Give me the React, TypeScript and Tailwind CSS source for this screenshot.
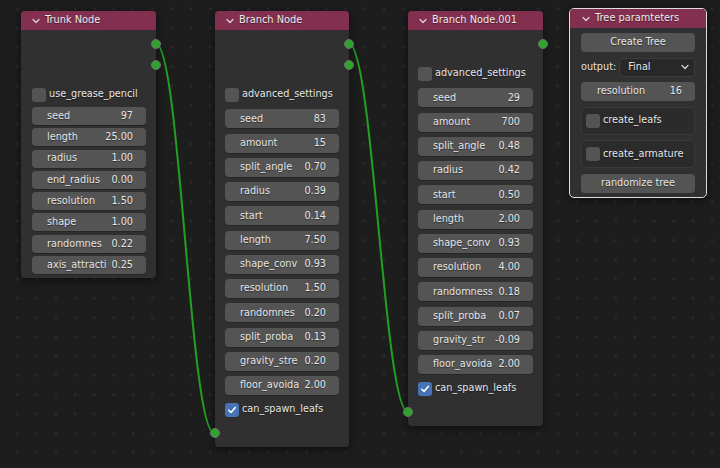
import React from "react";

type Field = [string, string];

const trunkFields: Field[] = [
  ["seed", "97"],
  ["length", "25.00"],
  ["radius", "1.00"],
  ["end_radius", "0.00"],
  ["resolution", "1.50"],
  ["shape", "1.00"],
  ["randomnes", "0.22"],
  ["axis_attracti", "0.25"],
];

const branchFields: Field[] = [
  ["seed", "83"],
  ["amount", "15"],
  ["split_angle", "0.70"],
  ["radius", "0.39"],
  ["start", "0.14"],
  ["length", "7.50"],
  ["shape_conv", "0.93"],
  ["resolution", "1.50"],
  ["randomnes", "0.20"],
  ["split_proba", "0.13"],
  ["gravity_stre", "0.20"],
  ["floor_avoida", "2.00"],
];

const branch001Fields: Field[] = [
  ["seed", "29"],
  ["amount", "700"],
  ["split_angle", "0.48"],
  ["radius", "0.42"],
  ["start", "0.50"],
  ["length", "2.00"],
  ["shape_conv", "0.93"],
  ["resolution", "4.00"],
  ["randomness", "0.18"],
  ["split_proba", "0.07"],
  ["gravity_str", "-0.09"],
  ["floor_avoida", "2.00"],
];

function Chevron() {
  return (
    <svg width="8" height="6" viewBox="0 0 8 6" className="shrink-0">
      <path d="M1 1.5 L4 4.5 L7 1.5" fill="none" stroke="#d8d8d8" strokeWidth="1.2" strokeLinecap="round" strokeLinejoin="round" />
    </svg>
  );
}

function Header({ title }: { title: string }) {
  return (
    <div className="flex h-[19px] items-center gap-[5px] rounded-t-[4px] bg-[#833050] pl-[11px] text-[9.8px] text-[#ececec]">
      <Chevron />
      <span>{title}</span>
    </div>
  );
}

function Socket({ side }: { side: "left" | "right" }) {
  return (
    <div
      className={
        side === "right"
          ? "absolute -right-[5px] top-1/2 h-[10px] w-[10px] -translate-y-1/2 rounded-full border border-[#6f6f6f] bg-[#2ea32e]"
          : "absolute -left-[5px] top-1/2 h-[10px] w-[10px] -translate-y-1/2 rounded-full border border-[#6f6f6f] bg-[#2ea32e]"
      }
    />
  );
}

function SocketRow({ side }: { side: "left" | "right" }) {
  return (
    <div className="relative h-[21px]">
      <Socket side={side} />
    </div>
  );
}

function Check({ label, checked }: { label: string; checked?: boolean }) {
  return (
    <div className="flex h-[21px] items-center gap-[3px]">
      <div
        className={
          checked
            ? "flex h-[14px] w-[14px] items-center justify-center rounded-[3px] bg-[#4772b3]"
            : "h-[14px] w-[14px] rounded-[3px] bg-[#545454]"
        }
      >
        {checked && (
          <svg width="10" height="10" viewBox="0 0 10 10">
            <path d="M1.8 5.2 L4 7.4 L8.3 2.4" fill="none" stroke="#ffffff" strokeWidth="1.6" strokeLinecap="round" strokeLinejoin="round" />
          </svg>
        )}
      </div>
      <span>{label}</span>
    </div>
  );
}

function FieldRow({ f, tall }: { f: Field; tall?: boolean }) {
  return (
    <div
      className={
        tall
          ? "flex h-[19px] items-center justify-between rounded-[4px] bg-[#545454] pl-[15px] pr-[13px] shadow-[0_1px_0_rgba(0,0,0,0.2)]"
          : "flex h-[18px] items-center justify-between rounded-[4px] bg-[#545454] pl-[15px] pr-[13px] shadow-[0_1px_0_rgba(0,0,0,0.2)]"
      }
    >
      <span className="whitespace-nowrap">{f[0]}</span>
      <span>{f[1]}</span>
    </div>
  );
}

const wireD = (x1: number, y1: number, x2: number, y2: number) => {
  const d = 24;
  return `M${x1} ${y1} C${x1 + d} ${y1} ${x2 - d} ${y2} ${x2} ${y2}`;
};

export default function App() {
  return (
    <div className="relative h-[468px] w-[720px] overflow-hidden bg-[#1d1d1d] font-['DejaVu_Sans',sans-serif] text-[9.7px] text-[#e6e6e6] [text-shadow:0_1px_1px_rgba(0,0,0,0.45)]">
      {/* canvas: dot grid + wires */}
      <svg className="absolute inset-0" width="720" height="468">
        <defs>
          <pattern id="grid" x="0" y="0" width="19.3" height="19.3" patternUnits="userSpaceOnUse">
            <rect x="16" y="7.4" width="2.6" height="2.6" fill="#2a2a2a" />
          </pattern>
        </defs>
        <rect width="720" height="468" fill="url(#grid)" />
        <path d={wireD(156, 44, 214, 433)} fill="none" stroke="#22a022" strokeWidth="2" />
        <path d={wireD(349, 44, 408, 412)} fill="none" stroke="#22a022" strokeWidth="2" />
      </svg>

      {/* Trunk Node */}
      <div className="absolute left-[21px] top-[11px] w-[135px] rounded-[4px] bg-[#303030] pb-[4px] shadow-[0_2px_8px_rgba(0,0,0,0.55)]">
        <Header title="Trunk Node" />
        <div className="pt-[3.5px]">
          <SocketRow side="right" />
          <SocketRow side="right" />
        </div>
        <div className="px-[11px] pr-[10px]">
          <div className="mt-[8.5px]">
            <Check label="use_grease_pencil" />
          </div>
          <div className="mt-[2px] flex flex-col gap-[3.3px]">
            {trunkFields.map((f) => (
              <FieldRow key={f[0]} f={f} />
            ))}
          </div>
        </div>
      </div>

      {/* Branch Node */}
      <div className="absolute left-[215px] top-[11px] w-[134px] rounded-[4px] bg-[#303030] pb-[3.5px] shadow-[0_2px_8px_rgba(0,0,0,0.55)]">
        <Header title="Branch Node" />
        <div className="pt-[3.5px]">
          <SocketRow side="right" />
          <SocketRow side="right" />
        </div>
        <div className="px-[10px]">
          <div className="mt-[8.5px]">
            <Check label="advanced_settings" />
          </div>
          <div className="mt-[4.3px] flex flex-col gap-[5.25px]">
            {branchFields.map((f) => (
              <FieldRow key={f[0]} f={f} tall />
            ))}
          </div>
          <div className="mt-[4px]">
            <Check label="can_spawn_leafs" checked />
          </div>
        </div>
        <div className="mt-[2.5px]">
          <SocketRow side="left" />
        </div>
      </div>

      {/* Branch Node.001 */}
      <div className="absolute left-[408px] top-[11px] w-[135px] rounded-[4px] bg-[#303030] pb-[3.5px] shadow-[0_2px_8px_rgba(0,0,0,0.55)]">
        <Header title="Branch Node.001" />
        <div className="pt-[3.5px]">
          <SocketRow side="right" />
        </div>
        <div className="px-[10px]">
          <div className="mt-[8.5px]">
            <Check label="advanced_settings" />
          </div>
          <div className="mt-[4.3px] flex flex-col gap-[5.25px]">
            {branch001Fields.map((f) => (
              <FieldRow key={f[0]} f={f} tall />
            ))}
          </div>
          <div className="mt-[4px]">
            <Check label="can_spawn_leafs" checked />
          </div>
        </div>
        <div className="mt-[2.5px]">
          <SocketRow side="left" />
        </div>
      </div>

      {/* Tree paramteters */}
      <div className="absolute left-[569px] top-[8px] w-[138px] rounded-[5px] border border-[#dedede] bg-[#303030] shadow-[0_2px_8px_rgba(0,0,0,0.55)]">
        <div className="flex h-[19px] items-center gap-[5px] rounded-t-[4px] bg-[#833050] pl-[12px] text-[9.8px] text-[#ececec]">
          <Chevron />
          <span>Tree paramteters</span>
        </div>
        <div className="flex flex-col gap-[5.5px] px-[11px] pb-[4px] pt-[5px]">
          <div className="flex h-[19px] items-center justify-center rounded-[4px] bg-[#545454]">Create Tree</div>
          <div className="flex h-[19px] items-center gap-[3px]">
            <span>output:</span>
            <div className="flex h-[19px] flex-1 items-center justify-between rounded-[4px] border border-[#3c3c3c] bg-[#282828] pl-[8px] pr-[5px]">
              <span>Final</span>
              <Chevron />
            </div>
          </div>
          <div className="flex h-[19px] items-center justify-between rounded-[4px] bg-[#545454] pl-[16px] pr-[13px]">
            <span>resolution</span>
            <span>16</span>
          </div>
          <div className="flex h-[28px] items-center rounded-[4px] border border-[#3a3a3a] bg-[#2b2b2b] pl-[4px]">
            <Check label="create_leafs" />
          </div>
          <div className="flex h-[28px] items-center rounded-[4px] border border-[#3a3a3a] bg-[#2b2b2b] pl-[4px]">
            <Check label="create_armature" />
          </div>
          <div className="flex h-[19px] items-center justify-center rounded-[4px] bg-[#545454]">randomize tree</div>
        </div>
      </div>
    </div>
  );
}
